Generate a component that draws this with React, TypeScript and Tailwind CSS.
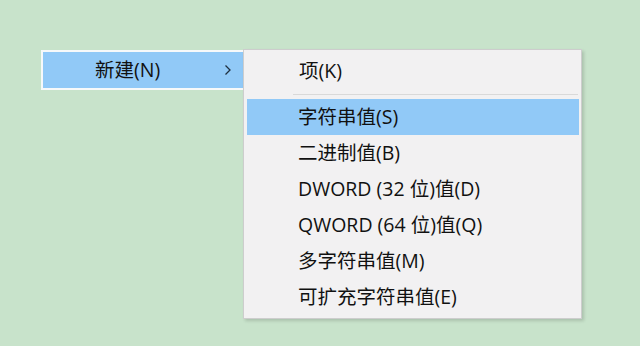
import React from "react";

const font = { fontFamily: '"Open Sans", "Noto Sans CJK SC", sans-serif' };

const items = [
  "字符串值(S)",
  "二进制值(B)",
  "DWORD (32 位)值(D)",
  "QWORD (64 位)值(Q)",
  "多字符串值(M)",
  "可扩充字符串值(E)",
];

export default function App() {
  return (
    <div
      className="w-[640px] h-[346px] bg-[#c8e3cb] flex items-start pl-[41px] pt-[49px] text-[#111111] text-[19.5px]"
      style={font}
    >
      <div className="mt-[1px] w-[202px] h-[40px] bg-[#f7f9fa] p-[2px] pr-0">
        <div className="h-full bg-[#91c9f7] flex items-center pl-[52px] pr-[10px]">
          <span className="flex-1 leading-none">新建(N)</span>
          <svg width="8" height="12" viewBox="0 0 8 12" className="mr-[1px]">
            <path d="M1.5 1.5 L6 6 L1.5 10.5" fill="none" stroke="#1f2f3f" strokeWidth="1.3" />
          </svg>
        </div>
      </div>
      <div className="w-[339px] bg-[#f2f1f2] border border-[#cdcdcd] pt-[3px] pb-[3px] pl-[3px] pr-[2px] shadow-[2px_2px_3px_rgba(0,0,0,0.15)]">
        <div className="h-[36px] flex items-center pl-[52px] leading-none">项(K)</div>
        <div className="h-[10px] flex items-center pl-[46px] pr-[1px]">
          <div className="h-[1px] w-full bg-[#d9d9d9]" />
        </div>
        {items.map((t, i) => (
          <div
            key={t}
            className={
              "h-[36px] flex items-center pl-[51px] leading-none " +
              (i === 0 ? "bg-[#91c9f7]" : "")
            }
          >
            {t}
          </div>
        ))}
      </div>
    </div>
  );
}
